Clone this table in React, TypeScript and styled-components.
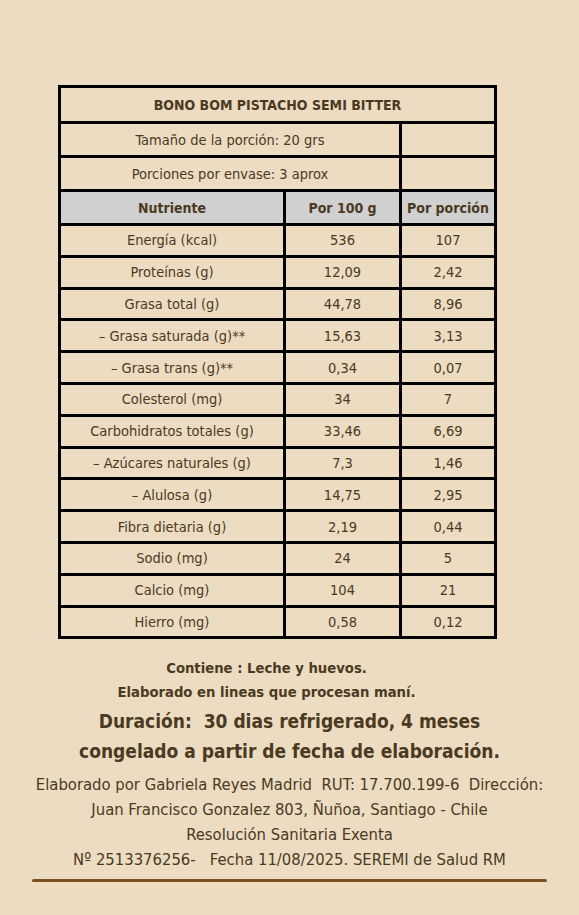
import React from "react";
import styled, { createGlobalStyle } from "styled-components";

const GlobalStyle = createGlobalStyle`
  html, body {
    margin: 0;
    padding: 0;
    background: #ecdcc1;
  }
  body {
    font-family: "DejaVu Sans Condensed", "Roboto", sans-serif;
    color: #4b3a1f;
  }
`;

const Page = styled.div`
  width: 579px;
  min-height: 915px;
  background: #ecdcc1;
  padding-top: 85px;
  box-sizing: border-box;
`;

const Table = styled.table`
  margin-left: 58px;
  width: 436px;
  border-collapse: collapse;
  border: 3px solid #000;
  table-layout: fixed;
`;

const Cell = styled.td<{ $h?: number; $bold?: boolean; $gray?: boolean }>`
  border: 3px solid #000;
  height: ${(p) => p.$h ?? 28.8}px;
  padding: 0 3px;
  text-align: center;
  font-size: ${(p) => (p.$bold ? 14 : 14.5)}px;
  font-weight: ${(p) => (p.$bold ? 700 : 400)};
  background: ${(p) => (p.$gray ? "#d0d0d0" : "transparent")};
  color: #4b3a1f;
  white-space: nowrap;
`;

const Notes = styled.div`
  margin-top: 17px;
  text-align: center;
`;

const Allergens = styled.div`
  padding-right: 46px;
  font-size: 14.7px;
  font-weight: 700;
  line-height: 24px;
`;

const Duration = styled.div`
  margin-top: 2px;
  font-size: 19px;
  font-weight: 700;
  line-height: 30px;
`;

const Maker = styled.div`
  margin-top: 6px;
  font-size: 16.5px;
  line-height: 25px;
`;

const Rule = styled.hr`
  margin: 7px auto 0;
  width: 515px;
  height: 3px;
  border: none;
  border-radius: 2px;
  background: #7b5122;
`;

const rows: [string, string, string][] = [
  ["Energía (kcal)", "536", "107"],
  ["Proteínas (g)", "12,09", "2,42"],
  ["Grasa total (g)", "44,78", "8,96"],
  ["– Grasa saturada (g)**", "15,63", "3,13"],
  ["– Grasa trans (g)**", "0,34", "0,07"],
  ["Colesterol (mg)", "34", "7"],
  ["Carbohidratos totales (g)", "33,46", "6,69"],
  ["– Azúcares naturales (g)", "7,3", "1,46"],
  ["– Alulosa (g)", "14,75", "2,95"],
  ["Fibra dietaria (g)", "2,19", "0,44"],
  ["Sodio (mg)", "24", "5"],
  ["Calcio (mg)", "104", "21"],
  ["Hierro (mg)", "0,58", "0,12"],
];

export default function App() {
  return (
    <Page>
      <GlobalStyle />
      <Table>
        <colgroup>
          <col style={{ width: 225 }} />
          <col style={{ width: 116 }} />
          <col style={{ width: 95 }} />
        </colgroup>
        <tbody>
          <tr>
            <Cell colSpan={3} $h={33} $bold>
              BONO BOM PISTACHO SEMI BITTER
            </Cell>
          </tr>
          <tr>
            <Cell colSpan={2} $h={31}>
              Tamaño de la porción: 20 grs
            </Cell>
            <Cell $h={31} />
          </tr>
          <tr>
            <Cell colSpan={2} $h={31}>
              Porciones por envase: 3 aprox
            </Cell>
            <Cell $h={31} />
          </tr>
          <tr>
            <Cell $h={31} $bold $gray>Nutriente</Cell>
            <Cell $h={31} $bold $gray>Por 100 g</Cell>
            <Cell $h={31} $bold $gray>Por porción</Cell>
          </tr>
          {rows.map(([name, per100, perPortion]) => (
            <tr key={name}>
              <Cell>{name}</Cell>
              <Cell>{per100}</Cell>
              <Cell>{perPortion}</Cell>
            </tr>
          ))}
        </tbody>
      </Table>
      <Notes>
        <Allergens>
          Contiene : Leche y huevos.
          <br />
          Elaborado en lineas que procesan maní.
        </Allergens>
        <Duration>
          Duración:&nbsp; 30 dias refrigerado, 4 meses
          <br />
          congelado a partir de fecha de elaboración.
        </Duration>
        <Maker>
          Elaborado por Gabriela Reyes Madrid&nbsp; RUT: 17.700.199-6&nbsp; Dirección:
          <br />
          Juan Francisco Gonzalez 803, Ñuñoa, Santiago - Chile
          <br />
          Resolución Sanitaria Exenta
          <br />
          Nº 2513376256-&nbsp;&nbsp; Fecha 11/08/2025. SEREMI de Salud RM
        </Maker>
        <Rule />
      </Notes>
    </Page>
  );
}
